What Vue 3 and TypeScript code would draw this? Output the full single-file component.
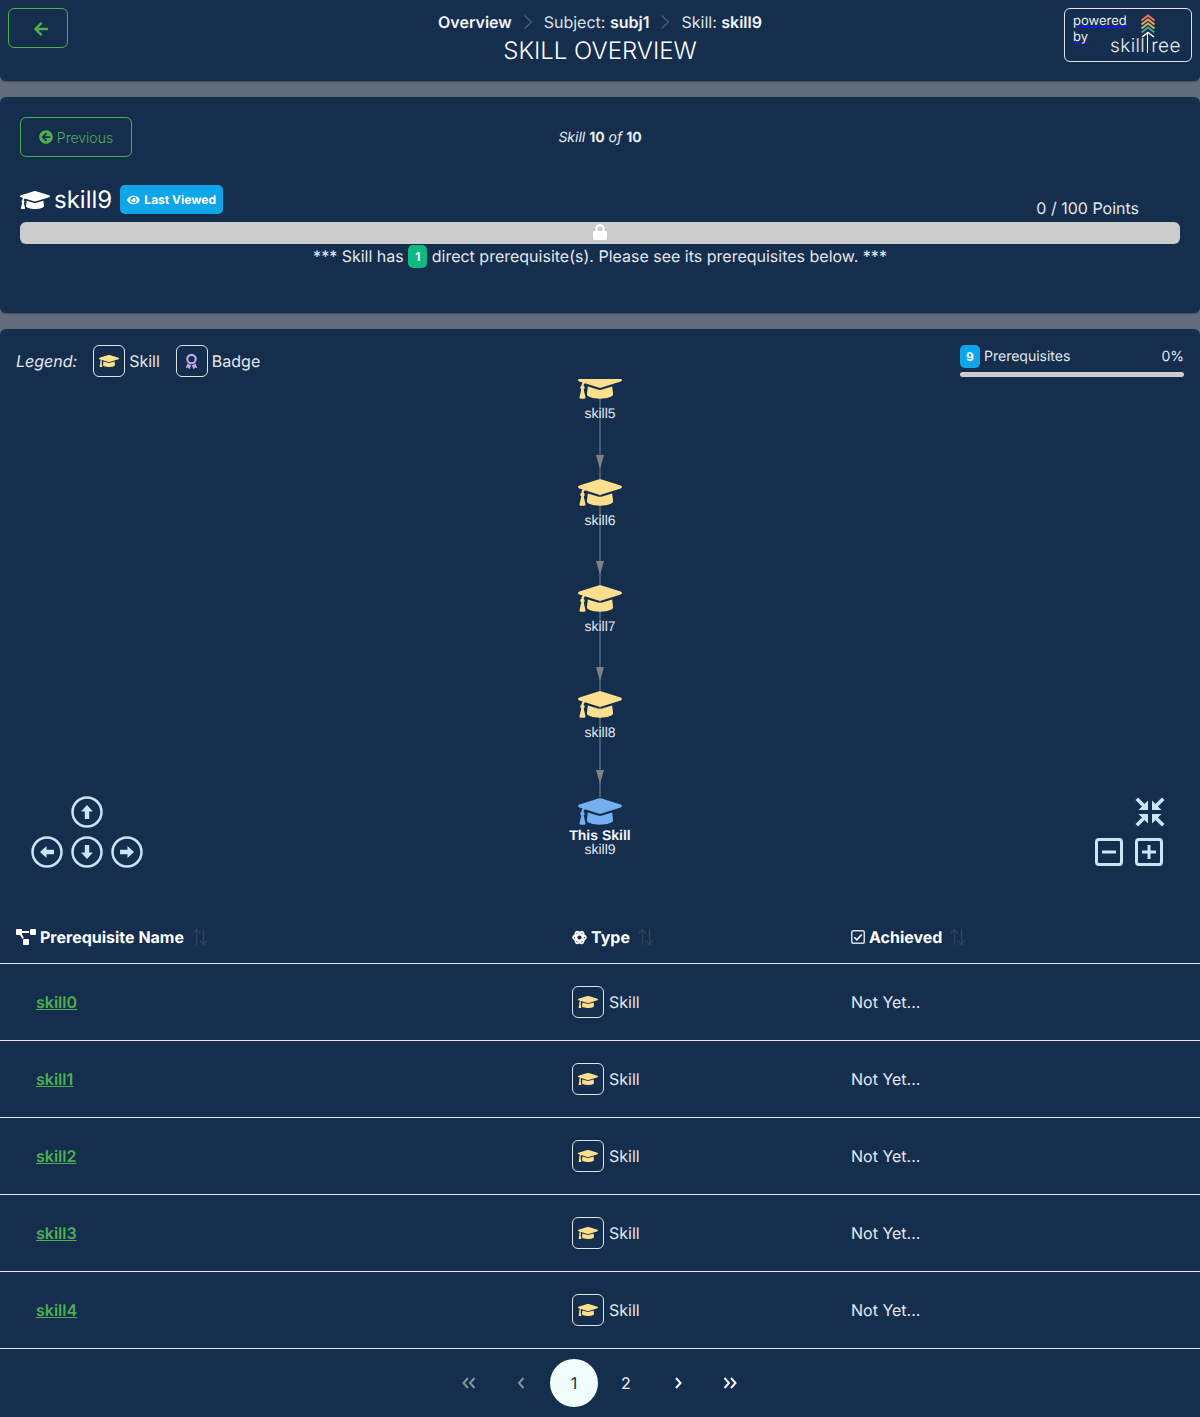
<template>
  <div class="page">
    <header class="card top-bar">
      <div class="top-left">
        <button class="btn back-btn" aria-label="Back">
          <svg class="ic-back" viewBox="0 0 448 512"><path :d="icons.arrowLeft" /></svg>
        </button>
      </div>
      <div class="top-center">
        <div class="crumbs">
          <span class="crumb"><b>Overview</b></span>
          <svg class="crumb-sep" viewBox="0 0 10 16"><path d="M1.500 1.500 8.500 8l-7 6.500" /></svg>
          <span class="crumb">Subject: <b>subj1</b></span>
          <svg class="crumb-sep" viewBox="0 0 10 16"><path d="M1.500 1.500 8.500 8l-7 6.500" /></svg>
          <span class="crumb">Skill: <b>skill9</b></span>
        </div>
        <h1 class="page-title">SKILL OVERVIEW</h1>
      </div>
      <div class="top-right">
        <div class="powered">
          <div class="powered-text"><span>powered</span><br /><span>by</span></div>
          <div class="logo">
            <svg class="logo-mark" viewBox="0 0 16 25" fill="none" stroke-width="2">
              <path d="M1.500 6.500 8 1.500l6.500 5" stroke="#e8795a" />
              <path d="M1.500 10.500 8 5.500l6.500 5" stroke="#eaa35a" />
              <path d="M1.500 14.500 8 9.500l6.500 5" stroke="#d9b05c" />
              <path d="M1.500 18.500 8 13.500l6.500 5" stroke="#3fa796" />
              <path d="M2 23 8 18.500l6 4.500" stroke="#ffffff" stroke-width="1.500" />
            </svg>
            <div class="logo-word">skill<i class="logo-stem"></i>ree</div>
          </div>
        </div>
      </div>
    </header>

    <section class="card skill-card">
      <div class="skill-nav">
        <button class="btn prev-btn">
          <svg class="ic-prev" viewBox="0 0 512 512"><path :d="icons.circleLeft" /></svg>
          Previous
        </button>
        <div class="skill-count"><i>Skill</i> <b>10</b> <i>of</i> <b>10</b></div>
      </div>
      <div class="skill-head">
        <div class="skill-name">
          <svg class="ic-cap-title" viewBox="0 0 640 512"><path :d="icons.cap" /></svg>
          <span>skill9</span>
          <span class="viewed">
            <svg class="ic-eye" viewBox="0 0 576 512"><path :d="icons.eye" /></svg>
            Last Viewed
          </span>
        </div>
        <div class="points">0 / 100 Points</div>
      </div>
      <div class="progress">
        <svg class="ic-lock" viewBox="0 0 448 512"><path :d="icons.lock" /></svg>
      </div>
      <div class="prereq-note">
        *** Skill has <span class="count-badge">1</span> direct prerequisite(s). Please see its prerequisites below. ***
      </div>
    </section>

    <section class="card deps-card">
      <div class="deps-top">
        <div class="legend">
          <i class="legend-label">Legend:</i>
          <span class="icon-box"><svg class="ic-cap-sm" viewBox="0 0 640 512"><path :d="icons.cap" /></svg></span>
          <span class="legend-item">Skill</span>
          <span class="icon-box box-badge">
            <svg class="ic-badge" viewBox="0 0 16 20">
              <path d="M3.200 12.500 0.800 18l3-.6L5.500 19.500 7.500 15zM12.800 12.500 15.200 18l-3-.6-1.700 2.100L8.500 15z" fill="#c5a8ee" />
              <circle cx="8" cy="7" r="5.200" fill="none" stroke="#c5a8ee" stroke-width="2.600" />
            </svg>
          </span>
          <span class="legend-item">Badge</span>
        </div>
        <div class="achieved-wrap">
          <div class="achieved-row">
            <span class="count-badge blue">9</span>
            <span class="achieved-label">Prerequisites</span>
            <span class="achieved-pct">0%</span>
          </div>
          <div class="achieved-bar"></div>
        </div>
      </div>

      <div class="graph">
        <div class="edge"></div>
        <svg v-for="y in arrowTops" :key="y" class="edge-arrow" :style="{ top: y + 'px' }" viewBox="0 0 8 14">
          <path d="M0 0 8 0 4 14z" />
        </svg>
        <div v-for="node in nodes" :key="node.label" class="node" :style="{ top: node.top + 'px' }">
          <svg class="node-cap" :class="{ current: node.current }" viewBox="0 0 640 512"><path :d="icons.cap" /></svg>
          <div v-if="node.current" class="node-this">This Skill</div>
          <div class="node-label" :class="{ tight: node.current }">{{ node.label }}</div>
        </div>

        <div class="nav-btns">
          <svg v-for="btn in navButtons" :key="btn.name" class="nav-btn" :class="btn.name" viewBox="0 0 32 32">
            <circle cx="16" cy="16" r="14.500" />
            <path :transform="`rotate(${btn.angle} 16 16)`" d="M16 9 10 15.500h3.800V23h4.400v-7.500H22z" />
          </svg>
        </div>
        <div class="zoom-btns">
          <svg class="zoom-fit" viewBox="0 0 30 30">
            <g v-for="angle in [0, 90, 180, 270]" :key="angle" :transform="`rotate(${angle} 15 15)`">
              <path d="M1.800 1.800 9 9" fill="none" stroke="#c7e6f7" stroke-width="3.600" />
              <path d="M13 3.500V13H3.500z" fill="#c7e6f7" />
            </g>
          </svg>
          <svg class="zoom-minus" viewBox="0 0 28 28" fill="none" stroke="#c7e6f7" stroke-width="3">
            <rect x="1.500" y="1.500" width="25" height="25" rx="2.500" />
            <path d="M7 14h14" />
          </svg>
          <svg class="zoom-plus" viewBox="0 0 28 28" fill="none" stroke="#c7e6f7" stroke-width="3">
            <rect x="1.500" y="1.500" width="25" height="25" rx="2.500" />
            <path d="M7 14h14M14 7v14" />
          </svg>
        </div>
      </div>

      <div class="table">
        <div class="thead row-grid">
          <div class="th">
            <svg class="th-ic tree" viewBox="0 0 640 512"><path :d="icons.diagram" /></svg>
            Prerequisite Name
            <svg class="sort" viewBox="0 0 16 18"><path d="M4.500 17V2M1 5.500l3.500-4 3.500 4M11.500 1v15M8 12.500l3.500 4 3.500-4" /></svg>
          </div>
          <div class="th">
            <svg class="th-ic atom" viewBox="0 0 16 16">
              <g fill="none" stroke="#fff" stroke-width="2">
                <ellipse cx="8" cy="8" rx="6.800" ry="3.200" />
                <ellipse cx="8" cy="8" rx="6.800" ry="3.200" transform="rotate(60 8 8)" />
                <ellipse cx="8" cy="8" rx="6.800" ry="3.200" transform="rotate(120 8 8)" />
              </g>
            </svg>
            Type
            <svg class="sort" viewBox="0 0 16 18"><path d="M4.500 17V2M1 5.500l3.500-4 3.500 4M11.500 1v15M8 12.500l3.500 4 3.500-4" /></svg>
          </div>
          <div class="th">
            <svg class="th-ic check" viewBox="0 0 14 14">
              <rect x="0.750" y="0.750" width="12.500" height="12.500" rx="1.500" fill="none" stroke="#d8dde3" stroke-width="1.500" />
              <path d="M3.300 7.200 5.900 9.800 10.800 4.500" fill="none" stroke="#fff" stroke-width="1.500" />
            </svg>
            Achieved
            <svg class="sort" viewBox="0 0 16 18"><path d="M4.500 17V2M1 5.500l3.500-4 3.500 4M11.500 1v15M8 12.500l3.500 4 3.500-4" /></svg>
          </div>
        </div>
        <div v-for="row in rows" :key="row" class="tr row-grid">
          <div class="td"><a class="skill-link" href="#">{{ row }}</a></div>
          <div class="td">
            <span class="icon-box"><svg class="ic-cap-sm" viewBox="0 0 640 512"><path :d="icons.cap" /></svg></span>
            <span class="type-text">Skill</span>
          </div>
          <div class="td not-yet">Not Yet...</div>
        </div>
      </div>

      <div class="pager">
        <span class="pg dim"><svg viewBox="0 0 14 12"><path d="M6 1 1.500 6 6 11M12.500 1 8 6l4.500 5" /></svg></span>
        <span class="pg dim"><svg viewBox="0 0 14 12"><path d="M9.500 1 5 6l4.500 5" /></svg></span>
        <span class="pg active">1</span>
        <span class="pg">2</span>
        <span class="pg"><svg viewBox="0 0 14 12"><path d="M5 1l4.500 5L5 11" /></svg></span>
        <span class="pg"><svg viewBox="0 0 14 12"><path d="M1.500 1 6 6l-4.500 5M8 1l4.500 5L8 11" /></svg></span>
      </div>
    </section>
  </div>
</template>

<script setup lang="ts">
interface GraphNode {
  label: string
  top: number
  current?: boolean
}

const icons = {
  cap: 'M622.34 153.2L343.4 67.5c-15.2-4.67-31.6-4.67-46.79 0L17.66 153.2c-23.54 7.23-23.54 38.36 0 45.59l48.63 14.94c-10.67 13.19-17.23 29.28-17.88 46.9C38.78 266.15 32 276.11 32 288c0 10.78 5.68 19.85 13.86 25.65L20.33 428.53C18.11 438.52 25.71 448 35.94 448h56.11c10.24 0 17.84-9.48 15.62-19.47L82.14 313.65C90.32 307.85 96 298.78 96 288c0-11.57-6.47-21.25-15.66-26.87.76-15.02 8.44-28.3 20.69-36.72L296.6 284.5c9.06 2.78 26.44 6.25 46.79 0l278.95-85.7c23.55-7.24 23.55-38.36 0-45.6zM352.79 315.09c-28.53 8.76-52.84 3.92-65.59 0l-145.02-44.55L128 384c0 35.35 85.96 64 192 64s192-28.65 192-64l-14.18-113.47-145.03 44.56z',
  arrowLeft: 'M257.5 445.1l-22.2 22.2c-9.4 9.4-24.6 9.4-33.9 0L7 273c-9.4-9.4-9.4-24.6 0-33.9L201.4 44.7c9.4-9.4 24.6-9.4 33.9 0l22.2 22.2c9.5 9.5 9.3 25-.4 34.3L136.6 216H424c13.3 0 24 10.7 24 24v32c0 13.3-10.7 24-24 24H136.6l120.5 114.8c9.8 9.3 10 24.8.4 34.3z',
  circleLeft: 'M256 504C119 504 8 393 8 256S119 8 256 8s248 111 248 248-111 248-248 248zm28.9-143.6L209.4 288H392c13.3 0 24-10.7 24-24v-16c0-13.3-10.7-24-24-24H209.4l75.5-72.4c9.7-9.3 9.9-24.8.4-34.3l-11-10.9c-9.4-9.4-24.6-9.4-33.9 0L107.7 239c-9.4 9.4-9.4 24.6 0 33.9l132.7 132.7c9.4 9.4 24.6 9.4 33.9 0l11-10.9c9.5-9.5 9.3-25-.4-34.3z',
  eye: 'M572.52 241.4C518.29 135.59 410.93 64 288 64S57.68 135.64 3.48 241.41a32.35 32.35 0 0 0 0 29.19C57.71 376.41 165.07 448 288 448s230.32-71.64 284.52-177.41a32.35 32.35 0 0 0 0-29.19zM288 400a144 144 0 1 1 144-144 143.93 143.93 0 0 1-144 144zm0-240a95.31 95.31 0 0 0-25.31 3.79 47.85 47.85 0 0 1-66.9 66.9A95.78 95.78 0 1 0 288 160z',
  lock: 'M400 224h-24v-72C376 68.2 307.8 0 224 0S72 68.2 72 152v72H48c-26.5 0-48 21.5-48 48v192c0 26.5 21.5 48 48 48h352c26.5 0 48-21.5 48-48V272c0-26.5-21.5-48-48-48zm-104 0H152v-72c0-39.7 32.3-72 72-72s72 32.3 72 72v72z',
  diagram: 'M384 320H256c-17.67 0-32 14.33-32 32v128c0 17.67 14.33 32 32 32h128c17.67 0 32-14.33 32-32V352c0-17.67-14.33-32-32-32zM192 32c0-17.67-14.33-32-32-32H32C14.33 0 0 14.33 0 32v128c0 17.67 14.33 32 32 32h95.72l73.16 128.04C211.98 300.98 232.4 288 256 288h.28L192 175.51V128h224V64H192V32zM608 0H480c-17.67 0-32 14.33-32 32v128c0 17.67 14.33 32 32 32h128c17.67 0 32-14.33 32-32V32c0-17.67-14.33-32-32-32z'
}

// tops are relative to the graph canvas, which clips the first node a little
const nodes: GraphNode[] = [
  { label: 'skill5', top: -11 },
  { label: 'skill6', top: 96 },
  { label: 'skill7', top: 202 },
  { label: 'skill8', top: 308 },
  { label: 'skill9', top: 415, current: true }
]

const navButtons = [
  { name: 'up', angle: 0 },
  { name: 'left', angle: -90 },
  { name: 'down', angle: 180 },
  { name: 'right', angle: 90 }
]

const arrowTops = [76, 182, 288, 391]
const rows = ['skill0', 'skill1', 'skill2', 'skill3', 'skill4']
</script>

<style scoped>
.page {
  font-family: Inter, "Noto Sans", sans-serif;
  font-size: 16px;
  color: #e4e8ed;
  text-rendering: geometricPrecision;
  display: flex;
  flex-direction: column;
  gap: 16px;
}

.card {
  background: #152e4d;
  border-radius: 6px;
  box-shadow: 0 1px 2px rgba(0, 0, 0, 0.3);
}

.btn {
  background: transparent;
  border: 1px solid #4caf50;
  border-radius: 6px;
  color: #4caf50;
  font-family: inherit;
  display: flex;
  align-items: center;
  justify-content: center;
  padding: 0;
}

.top-bar {
  height: 81px;
  border-radius: 0 0 6px 6px;
  display: grid;
  grid-template-columns: 1fr auto 1fr;
  padding: 8px;
  box-sizing: border-box;
}

.back-btn {
  width: 60px;
  height: 40px;
}

.ic-back {
  width: 14px;
  height: 16px;
  margin-left: 5px;
  margin-top: 2px;
  fill: #4caf50;
}

.top-center {
  text-align: center;
  padding-top: 4px;
}

.crumbs {
  display: flex;
  align-items: center;
  justify-content: center;
  height: 20px;
  line-height: 20px;
  color: #dde2e8;
  margin-bottom: 4px;
}

.crumbs b {
  font-weight: 600;
  color: #f3f5f7;
}

.crumb-sep {
  width: 10px;
  height: 16px;
  margin: 0 11px;
  fill: none;
  stroke: #4a5869;
  stroke-width: 1.500;
}

.page-title {
  margin: 0;
  font-size: 24px;
  line-height: 30px;
  font-weight: 300;
  color: #fff;
}

.top-right {
  display: flex;
  justify-content: flex-end;
}

.powered {
  width: 128px;
  height: 54px;
  box-sizing: border-box;
  border: 1px solid #dfe3e8;
  border-radius: 6px;
  display: flex;
  justify-content: space-between;
  padding: 4px 11px 0 8px;
}

.powered-text {
  width: 38px;
  font-size: 13px;
  line-height: 16px;
  color: #e9edf1;
  white-space: nowrap;
  text-decoration: underline;
  text-decoration-color: #1a1ad6;
  text-decoration-thickness: 1.500px;
}

.logo {
  display: flex;
  flex-direction: column;
  align-items: center;
  width: 69px;
}

.logo-mark {
  width: 16px;
  height: 25px;
  margin: 1px 0 0 5px;
}

.logo-word {
  font-size: 19px;
  line-height: 18px;
  font-weight: 300;
  letter-spacing: 0.400px;
  color: #e8ecf0;
  margin-top: -7px;
  white-space: nowrap;
}

.logo-stem {
  display: inline-block;
  width: 1px;
  height: 21px;
  margin: 0 3px 0 2px;
  background: #fff;
  vertical-align: -1px;
}

.skill-card {
  height: 216px;
  box-sizing: border-box;
  padding: 20px;
}

.skill-nav {
  display: grid;
  grid-template-columns: 1fr auto 1fr;
  align-items: center;
}

.prev-btn {
  width: 112px;
  height: 40px;
  font-size: 14px;
  font-weight: 300;
  gap: 4px;
}

.ic-prev {
  width: 14px;
  height: 14px;
  fill: #4caf50;
}

.skill-count {
  font-size: 14px;
  line-height: 18px;
  margin-top: 2px;
  color: #e9edf1;
}

.skill-count i {
  font-weight: 400;
}

.skill-count b {
  font-weight: 700;
}

.skill-head {
  display: flex;
  justify-content: space-between;
  align-items: flex-end;
  margin-top: 28px;
  height: 29px;
}

.skill-name {
  display: flex;
  align-items: center;
  font-size: 24px;
  color: #fff;
}

.ic-cap-title {
  width: 30px;
  height: 24px;
  fill: #fff;
  margin-right: 4px;
}

.viewed {
  margin-left: 8px;
  width: 103px;
  height: 29px;
  border-radius: 5px;
  background: #0ea5e9;
  color: #fff;
  font-size: 12px;
  font-weight: 700;
  display: flex;
  align-items: center;
  justify-content: center;
  gap: 4px;
}

.ic-eye {
  width: 13px;
  height: 12px;
  fill: #fff;
}

.points {
  margin: 0 41px -3px 0;
  line-height: 18px;
}

.progress {
  margin-top: 8px;
  height: 22px;
  border-radius: 6px;
  background: #cccccc;
  display: flex;
  justify-content: center;
  align-items: center;
}

.ic-lock {
  width: 14px;
  height: 16px;
  fill: #fff;
  margin-top: -3px;
}

.prereq-note {
  text-align: center;
  line-height: 24px;
  height: 25px;
}

.count-badge {
  display: inline-block;
  width: 19px;
  height: 23px;
  line-height: 24px;
  border-radius: 5px;
  background: #10b981;
  color: #fff;
  font-size: 12px;
  font-weight: 700;
  text-align: center;
  vertical-align: top;
  margin-top: 1px;
}

.count-badge.blue {
  width: 20px;
  background: #0ea5e9;
  margin: 0;
}

.deps-card {
  border-radius: 6px 6px 0 0;
}

.deps-top {
  height: 50px;
  box-sizing: border-box;
  padding: 16px 16px 0;
  display: flex;
  justify-content: space-between;
}

.legend {
  display: flex;
  align-items: center;
  height: 32px;
}

.legend-label {
  margin-right: 16px;
}

.icon-box {
  width: 32px;
  height: 32px;
  box-sizing: border-box;
  border: 1px solid #dfe3e8;
  border-radius: 6px;
  display: inline-flex;
  align-items: center;
  justify-content: center;
}

.ic-cap-sm {
  width: 20px;
  height: 16px;
  fill: #fde08d;
}

.ic-badge {
  width: 13px;
  height: 17px;
}

.legend-item {
  margin: 0 16px 0 4px;
}

.legend-item:last-child {
  margin-right: 0;
}

.achieved-wrap {
  width: 224px;
}

.achieved-row {
  display: flex;
  align-items: center;
  height: 23px;
  font-size: 14px;
  line-height: 23px;
}

.achieved-label {
  margin-left: 4px;
  flex: 1;
}

.achieved-bar {
  margin-top: 4px;
  height: 5px;
  border-radius: 3px;
  background: #cccccc;
}

.graph {
  position: relative;
  height: 536px;
  overflow: hidden;
}

.edge {
  position: absolute;
  left: 599px;
  top: 18px;
  height: 400px;
  width: 2px;
  background: #45576d;
}

.edge-arrow {
  position: absolute;
  left: 596px;
  width: 8px;
  height: 14px;
  fill: #7d8288;
}

.node {
  position: absolute;
  left: 500px;
  width: 200px;
  text-align: center;
  font-family: "Liberation Sans", Arial, sans-serif;
  font-size: 14px;
  line-height: 14px;
  color: #e1e6ec;
}

.node-cap {
  display: block;
  width: 44px;
  height: 35px;
  margin: 0 auto;
  fill: #fde08d;
}

.node-cap.current {
  fill: #74afef;
}

.node-label {
  margin-top: 3px;
}

.node-label.tight {
  margin-top: 0;
}

.node-this {
  font-weight: 700;
  color: #f2f4f6;
  margin-top: -1px;
}

.nav-btns {
  position: absolute;
  left: 31px;
  top: 417px;
  width: 112px;
  height: 72px;
}

.nav-btn {
  position: absolute;
  width: 32px;
  height: 32px;
}

.nav-btn circle {
  fill: none;
  stroke: #c7e6f7;
  stroke-width: 2.500;
}

.nav-btn path {
  fill: #c7e6f7;
}

.nav-btn.up { left: 40px; top: 0; }
.nav-btn.left { left: 0; top: 40px; }
.nav-btn.down { left: 40px; top: 40px; }
.nav-btn.right { left: 80px; top: 40px; }

.zoom-btns {
  position: absolute;
  left: 1095px;
  top: 418px;
  width: 72px;
  height: 70px;
}

.zoom-fit {
  position: absolute;
  left: 40px;
  top: 0;
  width: 30px;
  height: 30px;
}

.zoom-minus,
.zoom-plus {
  position: absolute;
  top: 41px;
  width: 28px;
  height: 28px;
}

.zoom-minus { left: 0; }
.zoom-plus { left: 40px; }

.row-grid {
  display: grid;
  grid-template-columns: 556px 279px 1fr;
  border-bottom: 1px solid #e4e8ec;
}

.thead {
  height: 49px;
  box-sizing: border-box;
}

.th {
  padding-left: 16px;
  display: flex;
  align-items: center;
  font-weight: 700;
  color: #fff;
  height: 44px;
}

.th-ic {
  margin-right: 4px;
  fill: #fff;
}

.th-ic.tree { width: 20px; height: 16px; }
.th-ic.atom { width: 15px; height: 15px; }
.th-ic.check { width: 14px; height: 14px; }

.sort {
  width: 16px;
  height: 18px;
  margin-left: 8px;
  fill: none;
  stroke: #2f4259;
  stroke-width: 1.500;
}

.tr {
  height: 77px;
  box-sizing: border-box;
}

.td {
  padding-left: 16px;
  display: flex;
  align-items: center;
}

.td:first-child {
  padding-left: 36px;
}

.skill-link {
  color: #4caf50;
  font-weight: 600;
  text-decoration: underline;
}

.type-text {
  margin-left: 5px;
}

.pager {
  height: 68px;
  display: flex;
  justify-content: center;
  align-items: center;
}

.pg {
  width: 48px;
  height: 48px;
  margin: 0 2px;
  border-radius: 50%;
  display: flex;
  align-items: center;
  justify-content: center;
  color: #f2f4f6;
}

.pg svg {
  width: 14px;
  height: 12px;
  fill: none;
  stroke: #f2f4f6;
  stroke-width: 2;
}

.pg.dim svg {
  stroke: #8792a0;
  margin-left: -2px;
}

.pg.active {
  background: #f0fdfa;
  color: #152e4d;
}
</style>

<style>
body {
  background: #626d7d;
}
</style>
